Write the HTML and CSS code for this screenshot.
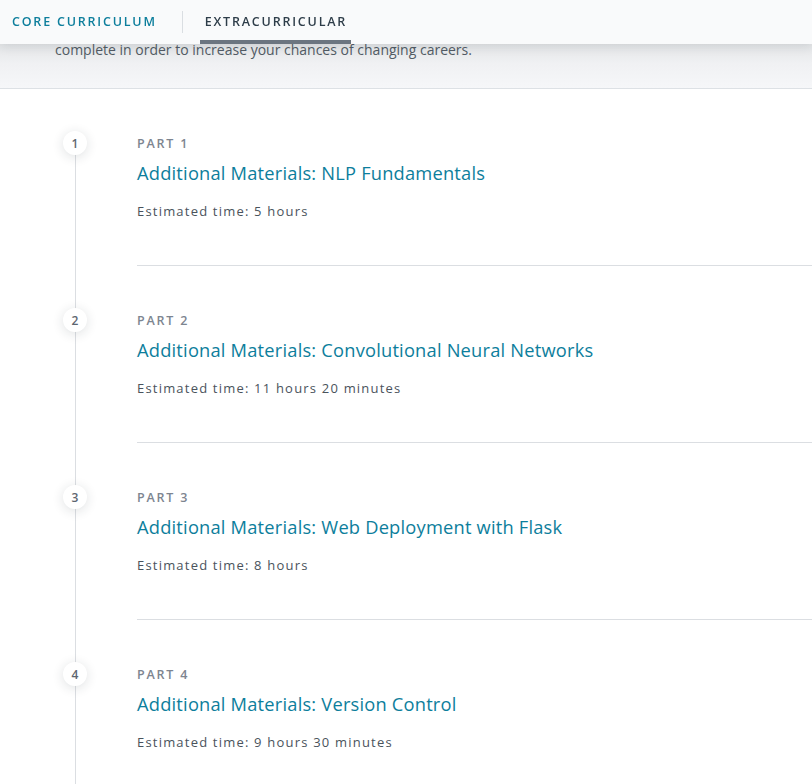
FILE: index.html
```html
<!DOCTYPE html>
<html>
<head>
<meta charset="utf-8">
<link rel="stylesheet" href="styles.css">
</head>
<body>
<nav class="tabs">
  <a class="tab tab-core">CORE CURRICULUM</a>
  <span class="tab-sep"></span>
  <a class="tab tab-active">EXTRACURRICULAR</a>
</nav>
<section class="intro">
  <p>complete in order to increase your chances of changing careers.</p>
</section>
<ol class="timeline">
  <li class="part">
    <span class="dot">1</span>
    <div class="part-body">
      <div class="part-label">PART 1</div>
      <h3 class="part-title">Additional Materials: NLP Fundamentals</h3>
      <div class="part-time">Estimated time: 5 hours</div>
    </div>
  </li>
  <li class="part">
    <span class="dot">2</span>
    <div class="part-body">
      <div class="part-label">PART 2</div>
      <h3 class="part-title">Additional Materials: Convolutional Neural Networks</h3>
      <div class="part-time">Estimated time: 11 hours 20 minutes</div>
    </div>
  </li>
  <li class="part">
    <span class="dot">3</span>
    <div class="part-body">
      <div class="part-label">PART 3</div>
      <h3 class="part-title">Additional Materials: Web Deployment with Flask</h3>
      <div class="part-time">Estimated time: 8 hours</div>
    </div>
  </li>
  <li class="part">
    <span class="dot">4</span>
    <div class="part-body">
      <div class="part-label">PART 4</div>
      <h3 class="part-title">Additional Materials: Version Control</h3>
      <div class="part-time">Estimated time: 9 hours 30 minutes</div>
    </div>
  </li>
</ol>
</body>
</html>
```
FILE: styles.css
```css
* { box-sizing: border-box; }
html, body { margin: 0; padding: 0; background: #fff; }
body {
  font-family: "Open Sans", "Noto Sans", sans-serif;
  color: #525c65;
  overflow: hidden;
}
.tabs {
  position: fixed;
  top: 0; left: 0; right: 0;
  height: 44px;
  background: #f9fafb;
  box-shadow: 0 2px 10px rgba(30, 40, 50, 0.12);
  display: flex;
  align-items: center;
  padding-left: 12px;
  z-index: 2;
}
.tab {
  font-size: 12.5px;
  font-weight: 600;
  letter-spacing: 1.8px;
  line-height: 44px;
  height: 44px;
  position: relative;
}
.tab-core { color: #0d7e9c; }
.tab-sep {
  width: 1px;
  height: 22px;
  background: #dadee2;
  margin: 0 22px 0 25px;
}
.tab-active { color: #2e3d49; }
.tab-active::after {
  content: "";
  position: absolute;
  left: -5px; right: -4px; bottom: 0;
  height: 4px;
  background: #6b7580;
}
.intro {
  height: 89px;
  background: linear-gradient(#e4e6e8 44px, #f0f1f3 64px, #f6f7f9 89px);
  border-bottom: 1px solid #dde1e5;
  padding: 40px 0 0 55px;
}
.intro p {
  margin: 0;
  font-size: 14px;
  line-height: 20px;
  color: #525c65;
}
.timeline {
  list-style: none;
  margin: 0;
  padding: 0 0 0 137px;
  position: relative;
}
.timeline::before {
  content: "";
  position: absolute;
  left: 75px;
  top: 60px;
  bottom: 0;
  width: 1px;
  background: #dbdee2;
}
.part {
  position: relative;
  padding: 45px 0 44px;
  border-bottom: 1px solid #dbdee2;
}
.dot {
  position: absolute;
  left: -74px;
  top: 42px;
  width: 24px;
  height: 24px;
  border-radius: 50%;
  background: #fff;
  box-shadow: 0 2px 12px rgba(30, 40, 50, 0.14);
  font-size: 12px;
  font-weight: 600;
  color: #5d6670;
  display: flex;
  align-items: center;
  justify-content: center;
  z-index: 1;
}
.part-label {
  font-size: 12.5px;
  font-weight: 600;
  letter-spacing: 1.8px;
  line-height: 20px;
  color: #7d8590;
}
.part-title {
  margin: 6px 0 0;
  font-size: 18.3px;
  font-weight: 400;
  line-height: 26px;
  letter-spacing: 0.2px;
  color: #0d7e9c;
}
.part-time {
  margin-top: 15px;
  font-size: 13px;
  font-weight: 500;
  letter-spacing: 1.2px;
  line-height: 20px;
  color: #4a535c;
}
```
